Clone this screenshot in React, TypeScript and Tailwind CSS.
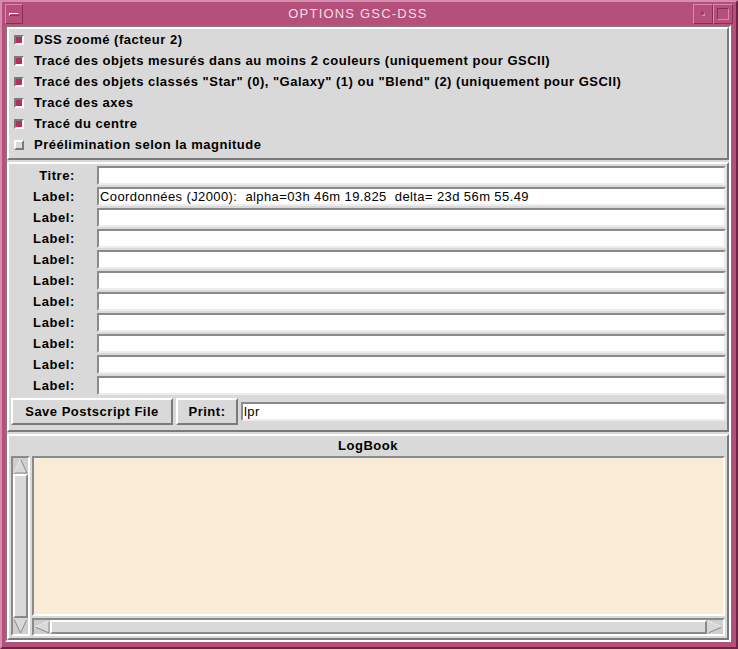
import React from 'react'

const font = { fontFamily: '"Liberation Sans", Arial, sans-serif' }

const options = [
  { text: 'DSS zoomé (facteur 2)', on: true },
  { text: 'Tracé des objets mesurés dans au moins 2 couleurs (uniquement pour GSCII)', on: true },
  { text: 'Tracé des objets classés "Star" (0), "Galaxy" (1) ou "Blend" (2) (uniquement pour GSCII)', on: true },
  { text: 'Tracé des axes', on: true },
  { text: 'Tracé du centre', on: true },
  { text: 'Préélimination selon la magnitude', on: false },
]

const labels = [
  { name: 'Titre:', value: '' },
  { name: 'Label:', value: 'Coordonnées (J2000):  alpha=03h 46m 19.825  delta= 23d 56m 55.49' },
  ...Array.from({ length: 9 }, () => ({ name: 'Label:', value: '' })),
]

function Check({ on }: { on: boolean }) {
  return (
    <div
      className={`w-[10px] h-[10px] border-2 ${
        on
          ? 'bg-[#b03060] border-t-[#7a7a7a] border-l-[#7a7a7a] border-b-white border-r-white'
          : 'bg-[#d9d9d9] border-t-white border-l-white border-b-[#7a7a7a] border-r-[#7a7a7a]'
      }`}
    />
  )
}

function Field({ value, className = '' }: { value: string; className?: string }) {
  return (
    <div
      className={`h-[19px] bg-white border-2 border-t-[#8a8a8a] border-l-[#8a8a8a] border-b-[#ececec] border-r-[#ececec] flex items-center pl-[1px] text-[13px] tracking-[0.4px] text-black whitespace-pre leading-none ${className}`}
    >
      {value}
    </div>
  )
}

export default function App() {
  return (
    <div style={font} className="w-[738px] h-[649px] bg-[#b4507a] flex flex-col border-l-2 border-t-2 border-l-[#d88ab0] border-t-[#d88ab0] border-r-2 border-b-2 border-r-[#6e2444] border-b-[#6e2444]">
      {/* Title bar */}
      <div className="h-[22px] flex items-stretch px-[3px] pt-[2px]">
        <div className="w-[18px] border border-t-[#d88ab0] border-l-[#d88ab0] border-b-[#8c2f55] border-r-[#8c2f55] flex items-center justify-center">
          <div className="w-[10px] h-[3px] border border-t-white border-l-white border-b-[#8c2f55] border-r-[#8c2f55]" />
        </div>
        <div className="flex-1 flex items-center justify-center text-[13px] text-[#f6dce8] tracking-[1.2px]">
          OPTIONS GSC-DSS
        </div>
        <div className="w-[20px] border border-t-[#d88ab0] border-l-[#d88ab0] border-b-[#8c2f55] border-r-[#8c2f55] flex items-center justify-center">
          <div className="w-[4px] h-[4px] border border-t-[#8c2f55] border-l-[#8c2f55] border-b-[#d88ab0] border-r-[#d88ab0]" />
        </div>
        <div className="w-[20px] border border-t-[#d88ab0] border-l-[#d88ab0] border-b-[#8c2f55] border-r-[#8c2f55] flex items-center justify-center">
          <div className="w-[12px] h-[12px] border border-t-[#8c2f55] border-l-[#8c2f55] border-b-[#d88ab0] border-r-[#d88ab0]" />
        </div>
      </div>

      {/* Content */}
      <div className="flex-1 mx-[3px] mt-[1px] mb-[5px] mr-[5px] bg-[#d9d9d9] flex flex-col gap-[2px] border-2 border-t-[#7a7a7a] border-l-[#7a7a7a] border-b-white border-r-white text-black">
        {/* Options */}
        <div className="h-[133px] border-2 border-t-white border-l-white border-b-[#7a7a7a] border-r-[#7a7a7a] flex flex-col pl-[5px]">
          {options.map((o, i) => (
            <div key={i} className="h-[21px] flex items-center gap-[10px]">
              <Check on={o.on} />
              <span className="text-[13px] font-bold tracking-[0.5px] whitespace-pre">{o.text}</span>
            </div>
          ))}
        </div>

        {/* Labels */}
        <div className="h-[270px] border-2 border-t-white border-l-white border-b-[#7a7a7a] border-r-[#7a7a7a] flex flex-col pt-[2px] pr-[1px] gap-[2px]">
          {labels.map((l, i) => (
            <div key={i} className="h-[19px] flex items-center">
              <div className="w-[88px] pr-[22px] text-right text-[13px] leading-none font-bold tracking-[0.6px]">{l.name}</div>
              <Field value={l.value} className="flex-1" />
            </div>
          ))}
          <div className="flex items-center gap-[3px] pl-[2px] mt-[1px]">
            <button className="w-[162px] h-[27px] border-2 border-t-white border-l-white border-b-[#7a7a7a] border-r-[#7a7a7a] text-[13px] font-bold tracking-[0.5px] bg-[#d9d9d9]">
              Save Postscript File
            </button>
            <button className="w-[62px] h-[27px] border-2 border-t-white border-l-white border-b-[#7a7a7a] border-r-[#7a7a7a] text-[13px] font-bold tracking-[0.5px] bg-[#d9d9d9]">
              Print:
            </button>
            <Field value="lpr" className="flex-1" />
          </div>
        </div>

        {/* LogBook */}
        <div className="flex-1 border-2 border-t-white border-l-white border-b-[#7a7a7a] border-r-[#7a7a7a] flex flex-col px-[2px] pb-[2px]">
          <div className="h-[20px] flex items-center justify-center text-[13px] font-bold tracking-[0.5px]">LogBook</div>
          <div className="flex-1 flex gap-[2px]">
            {/* vertical scrollbar */}
            <div className="w-[19px] border-2 border-t-[#8a8a8a] border-l-[#8a8a8a] border-b-white border-r-white flex flex-col bg-[#cfcfcf]">
              <svg width="15" height="16" viewBox="0 0 15 16" className="block">
                <polygon points="7.5,1 14,15 1,15" fill="#d9d9d9" stroke="#8a8a8a" />
                <polyline points="1,15 7.5,1" stroke="#fff" fill="none" />
              </svg>
              <div className="flex-1 border-2 border-t-white border-l-white border-b-[#8a8a8a] border-r-[#8a8a8a] bg-[#d9d9d9]" />
              <svg width="15" height="16" viewBox="0 0 15 16" className="block">
                <polygon points="1,1 14,1 7.5,15" fill="#d9d9d9" stroke="#8a8a8a" />
                <polyline points="1,1 14,1" stroke="#fff" fill="none" />
              </svg>
            </div>
            <div className="flex-1 flex flex-col gap-[2px]">
              <div className="flex-1 bg-[#faebd7] border-2 border-t-[#8a8a8a] border-l-[#8a8a8a] border-b-white border-r-white" />
              <div className="h-[18px] border-2 border-t-[#8a8a8a] border-l-[#8a8a8a] border-b-white border-r-white flex bg-[#cfcfcf]">
                <svg width="16" height="14" viewBox="0 0 16 14" className="block">
                  <polygon points="1,7 15,1 15,13" fill="#d9d9d9" stroke="#8a8a8a" />
                  <polyline points="1,7 15,1" stroke="#fff" fill="none" />
                </svg>
                <div className="flex-1 border-2 border-t-white border-l-white border-b-[#8a8a8a] border-r-[#8a8a8a] bg-[#d9d9d9]" />
                <svg width="16" height="14" viewBox="0 0 16 14" className="block">
                  <polygon points="1,1 15,7 1,13" fill="#d9d9d9" stroke="#8a8a8a" />
                  <polyline points="1,13 1,1 15,7" stroke="#fff" fill="none" />
                </svg>
              </div>
            </div>
          </div>
        </div>
      </div>
    </div>
  )
}
